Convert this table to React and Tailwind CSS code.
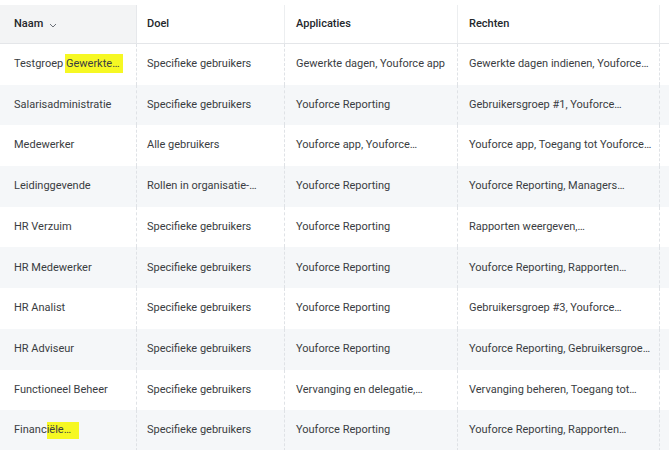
import React from 'react';

const rows = [
  ['Testgroep Gewerkte…', 'Specifieke gebruikers', 'Gewerkte dagen, Youforce app', 'Gewerkte dagen indienen, Youforce…'],
  ['Salarisadministratie', 'Specifieke gebruikers', 'Youforce Reporting', 'Gebruikersgroep #1, Youforce…'],
  ['Medewerker', 'Alle gebruikers', 'Youforce app, Youforce…', 'Youforce app, Toegang tot Youforce…'],
  ['Leidinggevende', 'Rollen in organisatie-…', 'Youforce Reporting', 'Youforce Reporting, Managers…'],
  ['HR Verzuim', 'Specifieke gebruikers', 'Youforce Reporting', 'Rapporten weergeven,…'],
  ['HR Medewerker', 'Specifieke gebruikers', 'Youforce Reporting', 'Youforce Reporting, Rapporten…'],
  ['HR Analist', 'Specifieke gebruikers', 'Youforce Reporting', 'Gebruikersgroep #3, Youforce…'],
  ['HR Adviseur', 'Specifieke gebruikers', 'Youforce Reporting', 'Youforce Reporting, Gebruikersgroe…'],
  ['Functioneel Beheer', 'Specifieke gebruikers', 'Vervanging en delegatie,…', 'Vervanging beheren, Toegang tot…'],
  ['Financiële…', 'Specifieke gebruikers', 'Youforce Reporting', 'Youforce Reporting, Rapporten…'],
];

const widths = ['w-[137px]', 'w-[148px]', 'w-[173px]', 'w-[202px]'];

// yellow marker strokes from the screenshot
function Name({ text }) {
  if (text.startsWith('Testgroep')) {
    return (
      <span>
        Testgroep{' '}
        <span className="bg-[#f6f823] pr-[3px] -ml-[1px] pl-[1px] pt-[3px] pb-[3px]">Gewerkte…</span>
      </span>
    );
  }
  if (text.startsWith('Financi')) {
    return (
      <span>
        Financ<span className="bg-[#f6f823] pr-[8px] pb-[3px] pt-[1px]">iële…</span>
      </span>
    );
  }
  return text;
}

export default function App() {
  return (
    <div className="w-[669px] h-[450px] overflow-hidden bg-white text-[11px] text-[#3a3d42] font-['Roboto',sans-serif]">
      {/* header */}
      <div className="flex h-[44px] pt-[5px] border-b border-[#e4e6e9] text-[#24272b]">
        <div className={`${widths[0]} bg-[#f3f4f5] flex items-center pl-[14px] gap-[6px] font-medium border-r border-[#e6e8eb]`}>
          Naam
          <svg width="8" height="5" viewBox="0 0 8 5" className="mt-[2px]">
            <path d="M1 1l3 3 3-3" fill="none" stroke="#6b7078" strokeWidth="1" />
          </svg>
        </div>
        <div className={`${widths[1]} flex items-center pl-[10px] font-medium border-r border-[#eceef0]`}>Doel</div>
        <div className={`${widths[2]} flex items-center pl-[11px] font-medium border-r border-[#eceef0]`}>Applicaties</div>
        <div className={`${widths[3]} flex items-center pl-[11px] font-medium border-r border-[#eceef0]`}>Rechten</div>
        <div className="flex-1" />
      </div>

      {rows.map((r, i) => (
        <div key={i} className={`flex h-[40.7px] ${i % 2 === 1 ? 'bg-[#f5f7f9]' : 'bg-white'}`}>
          <div className={`${widths[0]} flex items-center pl-[14px] border-r border-dashed border-[#dfe2e6] whitespace-nowrap`}>
            <Name text={r[0]} />
          </div>
          <div className={`${widths[1]} flex items-center pl-[10px] border-r border-dashed border-[#dfe2e6] whitespace-nowrap`}>{r[1]}</div>
          <div className={`${widths[2]} flex items-center pl-[11px] border-r border-dashed border-[#dfe2e6] whitespace-nowrap`}>{r[2]}</div>
          <div className={`${widths[3]} flex items-center pl-[11px] border-r border-dashed border-[#dfe2e6] whitespace-nowrap overflow-hidden`}>{r[3]}</div>
          <div className="flex-1" />
        </div>
      ))}
    </div>
  );
}
